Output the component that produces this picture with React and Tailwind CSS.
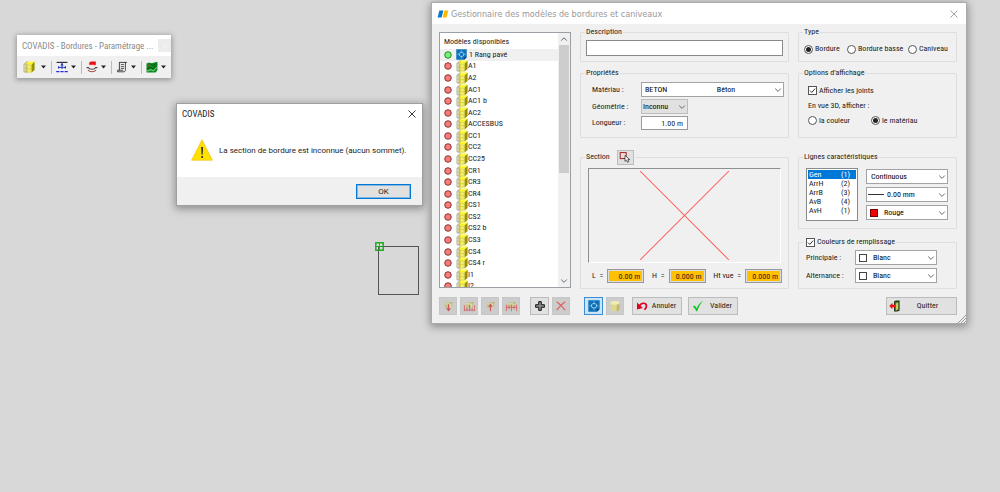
import React, { useState } from "react";

const UI = "font-['Roboto_Condensed','DejaVu_Sans_Condensed',sans-serif]";
const WIDE = "font-['Roboto','Open_Sans',sans-serif]";
const CAPTION = "font-['DejaVu_Sans_Condensed','DejaVu_Sans',sans-serif]";

const MODELS = [
  "1 Rang pavé", "A1", "A2", "AC1", "AC1 b", "AC2", "ACCESBUS", "CC1", "CC2", "CC25", "CR1",
  "CR3", "CR4", "CS1", "CS2", "CS2 b", "CS3", "CS4", "CS4 r", "I1", "I2",
];

const LINES = [["Gen", 1], ["ArrH", 2], ["ArrB", 3], ["AvB", 4], ["AvH", 1]];

/* ---------- icons ---------- */

function Chevron({ up = false, className = "" }) {
  return (
    <svg viewBox="0 0 8 8" className={`h-2 w-2 ${className}`} fill="none" stroke="#666" strokeWidth="1">
      <path d={up ? "M1.2 5.6 4 2.8 6.8 5.6" : "M1.2 2.6 4 5.4 6.8 2.6"} />
    </svg>
  );
}

function Close({ className = "" }) {
  return (
    <svg viewBox="0 0 8 8" className={className} fill="none" stroke="currentColor" strokeWidth="0.9">
      <path d="M.5.5l7 7M7.5.5l-7 7" />
    </svg>
  );
}

function CurbIcon({ className = "" }) {
  return (
    <svg viewBox="0 0 12 12" className={className}>
      <path d="M.4 3.2 3.4.4H6L4.4 4v7.800H1.600L.4 10.600z" fill="#bcbcae" />
      <path d="M1.200 4.200h2.200v2.200H1.200zM1.200 7.800h2.200v2H1.200z" fill="#dcd98e" />
      <path d="M3.200 2.600 5.200.4H11.600L8.800 3.600H3.600z" fill="#fbf400" />
      <path d="M5 1.600h4.600" stroke="#fffca0" strokeWidth=".8" />
      <path d="M3.600 3.600H8.600V11.600H3.600z" fill="#e2da38" />
      <path d="M4.600 4.800h3v2.200h-3zM4.600 8.200h3v2.400h-3z" fill="#f4ee86" />
      <path d="M3.800 3.600V11.600" stroke="#b8b040" strokeWidth=".6" />
      <path d="M8.600 3.600 11.600.8V9L8.600 11.600z" fill="#989200" />
    </svg>
  );
}

function BlueprintIcon({ className = "" }) {
  return (
    <svg viewBox="0 0 12 12" className={className}>
      <path d="M.3.3h11.400v8.600l-2.800 2.800H.3z" fill="#0f72b8" />
      <path d="M11.700 8.900H8.900v2.800z" fill="#063f78" />
      <path d="M4.800 3.600h2.400l1.200 1.200v2L7.200 8H4.800L3.600 6.800v-2z" fill="none" stroke="#c4e8ff" strokeWidth=".9" />
      <path d="M6 1v2.400M6 8.200v2.200M1.200 5.800h2.200M8.600 5.800h2.200" stroke="#6ab8ea" strokeWidth=".8" />
    </svg>
  );
}

function Bullet({ ok }) {
  return (
    <svg viewBox="0 0 8 8" className="h-2 w-2 shrink-0">
      <circle cx="4" cy="4" r="3.300" fill={ok ? "#74ee74" : "#f67c7c"} stroke={ok ? "#1f7a1f" : "#7a2c2c"} strokeWidth=".9" />
    </svg>
  );
}

function CylinderIcon({ className = "" }) {
  return (
    <svg viewBox="0 0 12 12" className={className}>
      <path d="M1.400 2.800v6.800c0 1 2 1.800 4.600 1.800s4.600-.8 4.600-1.800V2.800z" fill="#dcd795" />
      <path d="M7.600 4v7.300c1.800-.2 3-.9 3-1.700V2.800z" fill="#bfba70" />
      <ellipse cx="6" cy="2.800" rx="4.600" ry="1.900" fill="#f0edb4" />
    </svg>
  );
}

function InsertIcon({ kind }) {
  return (
    <svg viewBox="0 0 14 14" className="h-[13px] w-[13px]" fill="none">
      <path d="M3 4.200 5.200 2.200h6V7L9.200 8.600H3z" fill="#c6c290" />
      <path d="M3.400 4.200h5.800v4.400" stroke="#e6e3b8" strokeWidth=".9" />
      <path d="M9.200 4.200l2-2" stroke="#9d9866" strokeWidth=".6" />
      {kind === "down" && <path d="M7 4.500v7M5 8.800l2 2.600 2-2.600" stroke="#cc5a5a" strokeWidth="1.200" />}
      {kind === "downs" && <path d="M1.500 5.500V12M7 5.500V12M12.500 5.500V12M1 10.800h12M4.200 8v4M9.800 8v4" stroke="#d46a6a" strokeWidth="1" />}
      {kind === "up" && <path d="M7 12V5M5 7.400 7 4.800l2 2.600" stroke="#cc5a5a" strokeWidth="1.200" />}
      {kind === "ups" && <path d="M1.500 5V12M7 5V12M12.500 5V12M1 8h12M4.200 5.500v4.500M9.800 5.500v4.500" stroke="#d46a6a" strokeWidth="1" />}
    </svg>
  );
}

/* ---------- shared controls ---------- */

function Group({ legend, children, className = "" }) {
  return (
    <fieldset className={`min-w-0 rounded-[1px] border border-[#dedede] ${className}`}>
      <legend className="ml-1 flex h-[14px] items-center px-[1px] whitespace-nowrap">{legend}</legend>
      {children}
    </fieldset>
  );
}

function Combo({ label, options, className = "", pad = "pl-1", gray = false, glyph, id }) {
  return (
    <div className={`relative flex h-[15px] items-center ${className}`}>
      <select
        id={id}
        aria-label={label}
        className={`h-full w-full appearance-none border pr-2 text-[8px] leading-[13px] whitespace-pre text-black ${pad} ${gray ? "border-[#bdbdbd] bg-[#e1e1e1]" : "border-[#a3a3a3] bg-white"}`}
      >
        {options.map((o) => <option key={o}>{o}</option>)}
      </select>
      {glyph && <span className="pointer-events-none absolute left-1 flex items-center">{glyph}</span>}
      <Chevron className="pointer-events-none absolute right-[2px]" />
    </div>
  );
}

function Radio({ name, label, checked, onChange }) {
  return (
    <label className="flex items-center gap-[2px] whitespace-nowrap">
      <input
        type="radio" name={name} checked={checked} onChange={onChange}
        className="grid h-[9px] w-[9px] shrink-0 appearance-none place-items-center rounded-full border border-[#555] bg-white before:h-[5px] before:w-[5px] before:rounded-full checked:before:bg-[#222]"
      />
      {label}
    </label>
  );
}

function Check({ label }) {
  const [on, setOn] = useState(true);
  return (
    <label className="flex items-center gap-[2px] whitespace-nowrap">
      <span className="relative flex h-[9px] w-[9px] shrink-0">
        <input type="checkbox" checked={on} onChange={() => setOn(!on)} className="h-full w-full appearance-none border border-[#555] bg-white" />
        {on && (
          <svg viewBox="0 0 9 9" className="pointer-events-none absolute inset-0" fill="none" stroke="#333" strokeWidth="1">
            <path d="M2 4.600 3.800 6.400 7.200 2.600" />
          </svg>
        )}
      </span>
      {label}
    </label>
  );
}

const TONES = {
  normal: "border-[#bcbcbc] bg-[#e1e1e1]",
  off: "border-[#c6c6c6] bg-[#cccccc]",
  active: "border-[#3b8fd8] bg-[#cce4f7]",
};

function Button({ children, tone = "normal", size = "h-[18px]", className = "", ...rest }) {
  return (
    <button type="button" className={`flex shrink-0 items-center justify-center border ${TONES[tone]} ${size} ${className}`} {...rest}>
      {children}
    </button>
  );
}

function Swatch({ red }) {
  return <span className={`block h-2 w-2 border ${red ? "border-[#700] bg-[#f00000]" : "border-[#444] bg-white"}`} />;
}

/* ---------- floating toolbar ---------- */

function Toolbar() {
  const tools = [
    ["Modèles", <CurbIcon className="h-3 w-3" />],
    ["Cotation", (
      <svg viewBox="0 0 12 12" className="h-3 w-3" fill="none">
        <path d="M.6 1.400h10.800" stroke="#333" strokeWidth="1.200" />
        <path d="M6 2v6" stroke="#2030c0" strokeWidth="1" />
        <path d="M2.400 6.400h7.200" stroke="#2030c0" strokeWidth=".9" />
        <path d="M4.400 4.400 6 2.200l1.600 2.200zM4.400 6.400 2 5v2.800zM7.600 6.400l2.400-1.400v2.800z" fill="#2030c0" />
        <path d="M.2 10.600h3.200M4.400 10.600h3.200M8.600 10.600h3.200" stroke="#2030e0" strokeWidth="1.200" />
      </svg>
    )],
    ["Profil", (
      <svg viewBox="0 0 12 12" className="h-3 w-3" fill="none">
        <path d="M3.200 1.400 4.800.4h5v3.200L8.600 4.800H3.200z" fill="#e81414" />
        <path d="M3.200 3.800h5.400v2H3.200z" fill="#ffe4e4" />
        <path d="M.6 6.600h1.800c.8 2.200 6.400 2.200 7.200 0h1.800" stroke="#444" strokeWidth="1.200" />
        <path d="M2 9c2 2.400 6 2.400 8 0" stroke="#a04040" strokeWidth="1.100" />
      </svg>
    )],
    ["Métré", (
      <svg viewBox="0 0 12 12" className="h-3 w-3" fill="none" stroke="#333">
        <path d="M3 1.400h8M3.400 1.400v8M9.400 1.400v7.400c0 1.400-.6 2-1.600 2H1.600V9.200h5.600" strokeWidth=".9" />
        <path d="M4.800 3.600h3.200M4.800 5.600h3.200M4.800 7.400h3.200" strokeWidth=".8" />
      </svg>
    )],
    ["Terrain", (
      <svg viewBox="0 0 12 12" className="h-3 w-3" fill="none">
        <path d="M.5 2.600 3 1.400l2.400.8 6-1.400v8.400L9.600 11.400H.5z" fill="#0d8a22" />
        <path d="M1 8 4 6.400l3 1.400L11 3.400M4.400 2.400 7 4.600l3.600-2.400" stroke="#065012" strokeWidth=".9" />
        <path d="M1 10.200 5 8.600 7.400 10 11 6.200" stroke="#a8e8a8" strokeWidth=".8" />
        <path d="M1 5.400 3.400 4.200" stroke="#d03020" strokeWidth="1" />
      </svg>
    )],
  ];
  return (
    <section aria-label="Barre d'outils COVADIS" className="absolute top-[35px] left-[17px] w-[154px] bg-[#f0f0f0] shadow-[0_1px_5px_1px_rgba(0,0,0,0.3)]">
      <header className="flex h-[21px] items-center justify-between bg-white pl-[5px] text-[9px] text-[#8a8a8a]">
        <span className="whitespace-nowrap">COVADIS - Bordures - Paramétrage ...</span>
        <button type="button" aria-label="Fermer" className="flex h-[13px] w-[13px] shrink-0 items-center justify-center bg-[#ececec] text-white">
          <Close className="h-1 w-1" />
        </button>
      </header>
      <div className="flex h-[22px] items-center pl-1">
        {tools.map(([name, icon], i) => (
          <button
            key={name} type="button" aria-label={name}
            className={`flex h-[13px] w-[30px] items-center justify-between pr-[5px] ${i ? "border-l border-[#bbb] pl-1" : "pl-[2px]"}`}
          >
            {icon}
            <svg viewBox="0 0 6 4" className="h-1 w-[5px]"><path d="M0 .2h6L3 3.800z" fill="#222" /></svg>
          </button>
        ))}
      </div>
    </section>
  );
}

/* ---------- message box ---------- */

function Alert() {
  return (
    <section role="alertdialog" aria-label="COVADIS" className="absolute top-[103px] left-[176px] w-[247px] border border-[#a0a0a0] bg-white shadow-[0_2px_8px_1px_rgba(0,0,0,0.35)]">
      <header className="flex h-[19px] items-center justify-between pr-[6px] pl-[5px] text-[9px]">
        <span>COVADIS</span>
        <button type="button" aria-label="Fermer" className="text-[#222]"><Close className="h-2 w-2" /></button>
      </header>
      <div className="flex h-[54px] items-center gap-[6px] pl-[14px]">
        <svg viewBox="0 0 22 22" className="h-[22px] w-[22px]">
          <path d="M11 .8 21.400 21.200H.6z" fill="#ffe100" stroke="#f3c623" strokeWidth=".8" strokeLinejoin="round" />
          <path d="M10.200 8h1.800l-.4 7.800h-1z" fill="#222" />
          <circle cx="11.100" cy="18" r="1" fill="#222" />
        </svg>
        <p className={`pt-[2px] whitespace-nowrap ${WIDE}`}>La section de bordure est inconnue (aucun sommet).</p>
      </div>
      <footer className="flex h-[28px] items-center justify-end bg-[#f0f0f0] pr-[11px]">
        <button type="button" className={`flex h-[15px] w-[55px] items-center justify-center border border-[#0078d7] bg-[#e1e1e1] pt-[1px] outline outline-[#0078d7]/40 -outline-offset-2 ${WIDE}`}>OK</button>
      </footer>
    </section>
  );
}

/* ---------- model manager ---------- */

function ModelList() {
  const [sel, setSel] = useState(0);
  return (
    <div className="flex h-[256px] border border-[#9aa0a6] bg-white">
      <div className="min-w-0 flex-1 overflow-hidden">
        <h2 className="flex h-4 items-end pb-[1px] pl-1 leading-[12px]">Modèles disponibles</h2>
        <ul role="listbox" aria-label="Modèles disponibles" className="flex h-[243px] flex-col">
          {MODELS.map((m, i) => (
            <li key={m} role="option" aria-selected={i === sel} className={`flex min-h-0 flex-1 ${i === sel ? "bg-[#f0f0f0]" : ""}`}>
              <button type="button" onClick={() => setSel(i)} className="flex w-full items-center pl-1 text-left whitespace-nowrap">
                <Bullet ok={i === 0} />
                <span className="ml-1 flex w-3">
                  {i === 0 ? <BlueprintIcon className="h-[11px] w-[11px]" /> : <CurbIcon className="h-3 w-3" />}
                </span>
                <span className={i === 0 ? "pl-[1px]" : ""}>{m}</span>
              </button>
            </li>
          ))}
        </ul>
      </div>
      <div aria-hidden="true" className="flex w-3 flex-col items-center justify-between bg-[#f0f0f0]">
        <Chevron up className="my-[2px]" />
        <span className="w-[10px] flex-1 bg-[#f0f0f0]">
          <span className="block h-[128px] bg-[#cdcdcd]" />
        </span>
        <Chevron className="my-[2px]" />
      </div>
    </div>
  );
}

function Dimension({ id, label, value }) {
  return (
    <div className="flex items-center gap-1 whitespace-nowrap">
      <label htmlFor={id} className="whitespace-pre">{label}</label>
      <input id={id} defaultValue={value} className="h-[14px] w-[37px] border border-[#999] bg-[#ffc000] pr-[3px] text-right text-[8px] outline outline-[#ddd] -outline-offset-2" />
    </div>
  );
}

function Manager() {
  const [type, setType] = useState("Bordure");
  const [view, setView] = useState("le matériau");
  const [line, setLine] = useState(0);
  return (
    <section role="dialog" aria-label="Gestionnaire des modèles de bordures et caniveaux" className="absolute top-[2px] left-[431px] w-[536px] border border-[#aaaaaa] bg-[#f0f0f0] shadow-[0_2px_8px_1px_rgba(0,0,0,0.35)]">
      <header className={`flex h-[21px] items-center bg-white pr-2 pl-[5px] text-[9px] text-[#999] ${CAPTION}`}>
        <svg viewBox="0 0 12 8" className="mr-[2px] h-2 w-3">
          <path d="M2.400.4h4L4.600 7.600h-4z" fill="#0a78c8" />
          <path d="M7.400.4h4L9.600 7.600h-4z" fill="#ffb800" />
        </svg>
        <span className="flex-1">Gestionnaire des modèles de bordures et caniveaux</span>
        <button type="button" aria-label="Fermer"><Close className="h-2 w-2" /></button>
      </header>

      <div className="relative grid grid-cols-[132px_minmax(0,1fr)_159px] gap-x-[9px] pt-[1px] pr-[9px] pb-2 pl-[7px]">
        <div className="pt-[7px]"><ModelList /></div>

        <div className="flex flex-col">
          <Group legend="Description" className="h-[37px]">
            <div className="px-[5px] pt-[1px]">
              <input aria-label="Description" className="block h-4 w-full border border-[#8a8a8a] bg-white px-1 text-[8px]" />
            </div>
          </Group>
          <Group legend="Propriétés" className="mt-1 h-[72px]">
            <div className="grid grid-cols-[49px_1fr] items-center gap-y-[2px] pt-[2px] pr-1 pl-[11px]">
              <label htmlFor="mat">Matériau :</label>
              <Combo id="mat" pad="pl-[3px]" options={["BETON" + "\u00a0".repeat(27) + "Béton"]} />
              <label htmlFor="geo">Géométrie :</label>
              <Combo id="geo" gray pad="pl-[1px]" className="w-[47px]" options={["Inconnu"]} />
              <label htmlFor="len">Longueur :</label>
              <input id="len" defaultValue="1.00 m" className="h-[14px] w-[47px] border border-[#999] bg-white pr-1 text-right text-[8px]" />
            </div>
          </Group>
          <Group
            className="mt-3 h-[139px]"
            legend={
              <span className="flex items-center gap-[7px]">
                Section
                <Button aria-label="Choisir la section" size="h-[15px] w-[17px]">
                  <svg viewBox="0 0 12 12" className="h-3 w-3" fill="none">
                    <rect x="1.200" y="1.600" width="6" height="6" stroke="#a02020" />
                    <path d="M6 4.400v6l1.500-1.300 1.100 2.200 1.200-.6-1-2.100h2z" fill="#fff" stroke="#222" strokeWidth=".7" />
                  </svg>
                </Button>
              </span>
            }
          >
            <div className="mx-[7px] mt-1 h-[95px] border border-t-[#8f8f8f] border-r-white border-b-white border-l-[#8f8f8f] px-1 py-[2px]">
              <svg viewBox="0 0 88 88" className="h-full w-full" fill="none" stroke="#ff5c5c" strokeWidth="1">
                <path d="M0 0 88 88M88 0 0 88" />
              </svg>
            </div>
            <div className="flex justify-between pt-[6px] pr-[6px] pl-[11px]">
              <Dimension id="dl" label="L  =" value="0.00 m" />
              <Dimension id="dh" label="H  =" value="0.000 m" />
              <Dimension id="dv" label="Ht vue  =" value="0.000 m" />
            </div>
          </Group>
        </div>

        <div className="flex flex-col">
          <Group legend="Type" className="h-[37px]">
            <div className="grid grid-cols-[43px_61px_1fr] items-center pt-1 pl-[5px]">
              {["Bordure", "Bordure basse", "Caniveau"].map((t) => (
                <Radio key={t} name="type" label={t} checked={type === t} onChange={() => setType(t)} />
              ))}
            </div>
          </Group>
          <Group legend="Options d'affichage" className="mt-1 h-[72px]">
            <div className="flex flex-col gap-1 pt-[5px] pl-[9px] leading-[11px]">
              <Check label="Afficher les joints" />
              <p>En vue 3D, afficher :</p>
              <div className="grid grid-cols-[63px_1fr]">
                {["la couleur", "le matériau"].map((t) => (
                  <Radio key={t} name="view" label={t} checked={view === t} onChange={() => setView(t)} />
                ))}
              </div>
            </div>
          </Group>
          <Group legend="Lignes caractéristiques" className="mt-3 h-[79px]">
            <div className="flex justify-between pt-1 pr-2 pl-[7px]">
              <ul role="listbox" aria-label="Lignes caractéristiques" className="h-[53px] w-[52px] border border-[#8a8a8a] bg-white p-[1px]">
                {LINES.map(([n, c], i) => (
                  <li key={n} role="option" aria-selected={i === line}>
                    <button type="button" onClick={() => setLine(i)} className={`grid h-[9px] w-full grid-cols-[32px_1fr] items-center pl-[1px] text-left leading-[9px] ${i === line ? "bg-[#0078d7] text-white" : ""}`}>
                      <span>{n}</span><span>({c})</span>
                    </button>
                  </li>
                ))}
              </ul>
              <div className="flex w-[82px] flex-col gap-[3px] pt-[1px]">
                <Combo label="Type de ligne" options={["Continuous"]} />
                <Combo label="Épaisseur" pad="pl-5" options={["0.00 mm"]} glyph={<span className="-ml-[2px] h-px w-4 bg-[#333]" />} />
                <Combo label="Couleur" pad="pl-[17px]" options={["Rouge"]} glyph={<Swatch red />} />
              </div>
            </div>
          </Group>
          <Group legend={<span className="flex pl-[2px]"><Check label="Couleurs de remplissage" /></span>} className="mt-[6px] h-[54px]">
            <div className="grid grid-cols-[49px_82px] items-center gap-y-[3px] pt-[1px] pl-[7px] whitespace-nowrap">
              <label htmlFor="c1">Principale :</label>
              <Combo id="c1" pad="pl-[17px]" options={["Blanc"]} glyph={<Swatch />} />
              <label htmlFor="c2">Alternance :</label>
              <Combo id="c2" pad="pl-[17px]" options={["Blanc"]} glyph={<Swatch />} />
            </div>
          </Group>
        </div>

        <div className="mt-2 flex gap-[3px] pr-[1px]">
          <Button disabled tone="off" aria-label="Insérer un modèle" className="w-[18px]"><InsertIcon kind="down" /></Button>
          <Button disabled tone="off" aria-label="Insérer tous les modèles" className="w-[18px]"><InsertIcon kind="downs" /></Button>
          <Button disabled tone="off" aria-label="Exporter un modèle" className="w-[18px]"><InsertIcon kind="up" /></Button>
          <Button disabled tone="off" aria-label="Exporter tous les modèles" className="w-[18px]"><InsertIcon kind="ups" /></Button>
          <Button aria-label="Ajouter" className="ml-auto w-[19px]">
            <svg viewBox="0 0 10 10" className="h-[10px] w-[10px]"><path d="M3.700.6h2.600v3.100h3.100v2.600H6.300v3.100H3.700V6.300H.6V3.700h3.100z" fill="#888" stroke="#1a1a1a" /></svg>
          </Button>
          <Button disabled tone="off" aria-label="Supprimer" className="w-[18px]">
            <svg viewBox="0 0 10 10" className="h-[10px] w-[10px]" fill="none" stroke="#e06060" strokeWidth="1.200"><path d="M.8.8c3 2.400 6 5.400 8.400 8.400M9.200.8C6 3 3 6 .8 9.200" /></svg>
          </Button>
        </div>
        <div className="mt-2 flex pl-1">
          <Button tone="active" aria-label="Vue 2D" className="w-[19px]"><BlueprintIcon className="h-3 w-3" /></Button>
          <Button tone="off" aria-label="Vue 3D" className="ml-[3px] w-[18px]"><CylinderIcon className="h-3 w-3" /></Button>
          <Button className="ml-2 w-[50px] gap-1 pr-[2px]">
            <svg viewBox="0 0 12 12" className="h-3 w-3" fill="none">
              <path d="M3 6.600C5 2.400 10.600 2 10.400 6.200c-.1 1.600-.8 2.600-2 3.400" stroke="#e00020" strokeWidth="1.700" />
              <path d="M1 2.600V9.400l5.800-1.400z" fill="#e00020" />
            </svg>
            Annuler
          </Button>
          <Button className="ml-[6px] w-[50px] gap-[6px] pr-[2px]">
            <svg viewBox="0 0 12 12" className="h-3 w-3"><path d="M.8 6.600 2.800 5.600 4.600 8.200C6 5 8 2.600 11 .8 8.400 3.800 6.600 7 5.200 11.200H4.200C3.400 9.400 2.200 7.800.8 6.600z" fill="#0fc81e" /></svg>
            Valider
          </Button>
        </div>
        <div className="mt-2 flex justify-end">
          <Button className="w-[71px] gap-4 pr-4">
            <svg viewBox="0 0 12 12" className="h-3 w-3">
              <path d="M5 1.400 6.600.6h4v9.800l-2 1H5z" fill="#1c3a1c" />
              <path d="M6 1.800h3.800v8H6z" fill="#0d8a22" />
              <path d="M6.600 3.200 9.400 2v7.600L6.600 11z" fill="#d8d060" stroke="#333" strokeWidth=".4" />
              <path d="M.3 6 3.400 2.800v2h2.800v2.400H3.400v2z" fill="#f01010" />
            </svg>
            Quitter
          </Button>
        </div>

        <svg viewBox="0 0 8 8" className="absolute right-0 bottom-0 h-2 w-2" stroke="#8a8a8a" strokeWidth=".9">
          <path d="M0 8 8 0M3 8l5-5M6 8l2-2" />
        </svg>
      </div>
    </section>
  );
}

export default function App() {
  return (
    <main className={`relative min-h-screen overflow-hidden bg-[#d8d8d8] text-[8px] leading-[12px] text-[#1c1c1c] ${UI}`}>
      <svg viewBox="0 0 46 54" className="absolute top-[242px] left-[375px] h-[54px] w-[46px]" fill="none">
        <rect x="3.500" y="4.500" width="40" height="48" stroke="#555" />
        <rect x=".8" y=".8" width="7.400" height="7.400" stroke="#12aa12" strokeWidth="1.400" />
        <path d="M4.500 1v7M1 4.500h7" stroke="#12aa12" strokeWidth=".8" />
      </svg>
      <Toolbar />
      <Alert />
      <Manager />
    </main>
  );
}
